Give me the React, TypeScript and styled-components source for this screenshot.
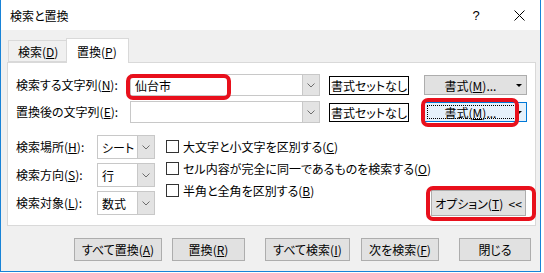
import styled, { createGlobalStyle } from "styled-components";

const GlobalStyle = createGlobalStyle`
  html, body {
    margin: 0;
    padding: 0;
    background: #fff;
  }
  body {
    font-family: "Noto Sans CJK JP", "Noto Sans", sans-serif;
    font-size: 12px;
    font-feature-settings: "palt";
    color: #000;
  }
  u {
    text-underline-offset: 1px;
  }
`;

const Window = styled.div`
  box-sizing: border-box;
  width: 541px;
  height: 272px;
  border: 1px solid #1883d7;
  border-top: none;
  display: flex;
  flex-direction: column;
  background: #f0f0f0;
`;

const TitleBar = styled.div`
  height: 30px;
  background: #fff;
  display: flex;
  align-items: center;
  padding-left: 9px;
`;

const TitleText = styled.div`
  flex: 1;
`;

const CaptionButton = styled.div<{ $w: number }>`
  width: ${(p) => p.$w}px;
  height: 30px;
  display: flex;
  align-items: center;
  justify-content: center;
  font-family: "Liberation Sans", sans-serif;
  font-size: 13px;
`;

const Body = styled.div`
  flex: 1;
  display: flex;
  flex-direction: column;
  padding: 8px 5px 0 6px;
`;

const TabRow = styled.div`
  display: flex;
  align-items: flex-end;
  height: 24px;
  padding-left: 1px;
  position: relative;
  z-index: 1;
`;

const Tab = styled.div<{ $active?: boolean; $w: number }>`
  box-sizing: border-box;
  width: ${(p) => p.$w}px;
  height: ${(p) => (p.$active ? 25 : 22)}px;
  margin-bottom: ${(p) => (p.$active ? -1 : 0)}px;
  margin-left: ${(p) => (p.$active ? -1 : 0)}px;
  background: ${(p) => (p.$active ? "#fff" : "#f0f0f0")};
  border: 1px solid #d9d9d9;
  border-bottom: ${(p) => (p.$active ? "none" : "1px solid #d9d9d9")};
  display: flex;
  align-items: center;
  padding-left: ${(p) => (p.$active ? 10 : 9)}px;
  padding-top: ${(p) => (p.$active ? 0 : 1)}px;
`;

const Panel = styled.div`
  box-sizing: border-box;
  height: 164px;
  width: 529px;
  background: #fff;
  border: 1px solid #d9d9d9;
  padding: 11px 0 0 8px;
  display: flex;
  flex-direction: column;
`;

const FieldGrid = styled.div`
  display: grid;
  grid-template-columns: 114px 190px 89px 118px;
  row-gap: 5px;
  align-items: center;
`;

const Label = styled.div`
  white-space: nowrap;
  line-height: 22px;
`;

const Combo = styled.div<{ $w: number; $h: number }>`
  position: relative;
  box-sizing: border-box;
  width: ${(p) => p.$w}px;
  height: ${(p) => p.$h}px;
  border: 1px solid #c8c8c8;
  display: flex;
  align-items: center;
  background: #fff;
`;

const ComboText = styled.div`
  flex: 1;
  padding-left: 4px;
  white-space: nowrap;
`;

const ComboArrow = styled.div`
  width: 16px;
  align-self: stretch;
  background: #e3e3e3;
  border-left: 1px solid #c8c8c8;
  display: flex;
  align-items: center;
  justify-content: center;
`;

const OutlineButton = styled.div`
  box-sizing: border-box;
  width: 80px;
  height: 19px;
  margin-left: 9px;
  border: 1px solid #000;
  background: #fff;
  display: flex;
  align-items: center;
  justify-content: center;
  white-space: nowrap;
`;

const FormatButton = styled.div<{ $focused?: boolean }>`
  position: relative;
  box-sizing: border-box;
  width: 103px;
  height: 20px;
  margin-left: 15px;
  border: 1px solid ${(p) => (p.$focused ? "#0078d7" : "#adadad")};
  background: ${(p) => (p.$focused ? "#e5f1fb" : "#e1e1e1")};
  display: flex;
  align-items: center;
  justify-content: center;
  padding-right: 10px;
  white-space: nowrap;
`;

const FocusRing = styled.div`
  position: absolute;
  left: 2px;
  top: 2px;
  right: 10px;
  bottom: 2px;
  border: 1px dotted #000;
`;

const Caret = styled.div`
  position: absolute;
  right: 4px;
  top: 8px;
  width: 0;
  height: 0;
  border-left: 3px solid transparent;
  border-right: 3px solid transparent;
  border-top: 3px solid #000;
`;

const Highlight = styled.div<{ $l: number; $t: number; $w: number; $h: number }>`
  position: absolute;
  box-sizing: border-box;
  left: ${(p) => p.$l}px;
  top: ${(p) => p.$t}px;
  width: ${(p) => p.$w}px;
  height: ${(p) => p.$h}px;
  border: 4px solid #e8101c;
  border-radius: 7px;
  pointer-events: none;
`;

const Options = styled.div`
  display: flex;
  margin-top: 12px;
  padding-right: 9px;
`;

const SelectColumn = styled.div`
  display: grid;
  grid-template-columns: 81px 58px;
  row-gap: 4px;
  align-items: center;
`;

const CheckColumn = styled.div`
  display: flex;
  flex-direction: column;
  margin-left: 11px;
`;

const CheckRow = styled.div`
  height: 22px;
  display: flex;
  align-items: center;
  gap: 4px;
  white-space: nowrap;
`;

const CheckBox = styled.div`
  box-sizing: border-box;
  width: 13px;
  height: 13px;
  border: 1px solid #333;
  background: #fff;
`;

const OptionButton = styled.div`
  position: relative;
  box-sizing: border-box;
  margin-left: auto;
  align-self: flex-end;
  margin-bottom: -1px;
  width: 99px;
  height: 26px;
  border: 1px solid #adadad;
  background: #e1e1e1;
  display: flex;
  align-items: center;
  justify-content: center;
  white-space: nowrap;
`;

const Footer = styled.div`
  display: flex;
  justify-content: flex-end;
  margin-top: 12px;
  padding-right: 4px;
`;

const DialogButton = styled.div<{ $w: number; $gap: number }>`
  box-sizing: border-box;
  width: ${(p) => p.$w}px;
  height: 23px;
  margin-left: ${(p) => p.$gap}px;
  border: 1px solid #adadad;
  background: #e1e1e1;
  display: flex;
  align-items: center;
  justify-content: center;
  white-space: nowrap;
`;

function Chevron() {
  return (
    <svg width="8" height="5" viewBox="0 0 8 5">
      <polyline points="0.5,0.5 4,4 7.5,0.5" fill="none" stroke="#6d6d6d" strokeWidth="1" />
    </svg>
  );
}

function CloseIcon() {
  return (
    <svg width="11" height="11" viewBox="0 0 11 11">
      <path d="M0.5 0.5 L10.5 10.5 M10.5 0.5 L0.5 10.5" stroke="#000" strokeWidth="1" />
    </svg>
  );
}

function Select({ value }: { value: string }) {
  return (
    <Combo $w={58} $h={24}>
      <ComboText>{value}</ComboText>
      <ComboArrow>
        <Chevron />
      </ComboArrow>
    </Combo>
  );
}

const selects = [
  { label: "検索場所", key: "H", value: "シート" },
  { label: "検索方向", key: "S", value: "行" },
  { label: "検索対象", key: "L", value: "数式" },
];

const checks = [
  { text: "大文字と小文字を区別する", key: "C" },
  { text: "セル内容が完全に同一であるものを検索する", key: "O" },
  { text: "半角と全角を区別する", key: "B" },
];

const footerButtons = [
  { text: "すべて置換", key: "A", w: 88, gap: 0 },
  { text: "置換", key: "R", w: 73, gap: 10 },
  { text: "すべて検索", key: "I", w: 85, gap: 20 },
  { text: "次を検索", key: "F", w: 78, gap: 11 },
  { text: "閉じる", key: "", w: 72, gap: 20 },
];

export default function App() {
  return (
    <>
      <GlobalStyle />
      <Window>
        <TitleBar>
          <TitleText>検索と置換</TitleText>
          <CaptionButton $w={46}>?</CaptionButton>
          <CaptionButton $w={41}>
            <CloseIcon />
          </CaptionButton>
        </TitleBar>
        <Body>
          <TabRow>
            <Tab $w={59}>
              検索(<u>D</u>)
            </Tab>
            <Tab $active $w={63}>
              置換(<u>P</u>)
            </Tab>
          </TabRow>
          <Panel>
            <FieldGrid>
              <Label>
                検索する文字列(<u>N</u>):
              </Label>
              <Combo $w={190} $h={22}>
                <ComboText>仙台市</ComboText>
                <ComboArrow>
                  <Chevron />
                </ComboArrow>
                <Highlight $l={-5} $t={-1} $w={105} $h={26} />
              </Combo>
              <OutlineButton>書式セットなし</OutlineButton>
              <FormatButton>
                書式(<u>M</u>)...
                <Caret />
              </FormatButton>

              <Label>
                置換後の文字列(<u>E</u>):
              </Label>
              <Combo $w={190} $h={22}>
                <ComboText />
                <ComboArrow>
                  <Chevron />
                </ComboArrow>
              </Combo>
              <OutlineButton>書式セットなし</OutlineButton>
              <FormatButton $focused>
                <FocusRing />
                書式(<u>M</u>)...
                <Caret />
                <Highlight $l={-4} $t={-5} $w={98} $h={29} />
              </FormatButton>
            </FieldGrid>

            <Options>
              <SelectColumn>
                {selects.flatMap((s) => [
                  <Label key={s.key + "l"}>
                    {s.label}(<u>{s.key}</u>):
                  </Label>,
                  <Select key={s.key} value={s.value} />,
                ])}
              </SelectColumn>
              <CheckColumn>
                {checks.map((c) => (
                  <CheckRow key={c.key}>
                    <CheckBox />
                    <span>
                      {c.text}(<u>{c.key}</u>)
                    </span>
                  </CheckRow>
                ))}
              </CheckColumn>
              <OptionButton>
                オプション(<u>T</u>)&nbsp; &lt;&lt;
                <Highlight $l={-6} $t={-5} $w={110} $h={35} />
              </OptionButton>
            </Options>
          </Panel>
          <Footer>
            {footerButtons.map((b) => (
              <DialogButton key={b.text} $w={b.w} $gap={b.gap}>
                {b.key ? (
                  <>
                    {b.text}(<u>{b.key}</u>)
                  </>
                ) : (
                  b.text
                )}
              </DialogButton>
            ))}
          </Footer>
        </Body>
      </Window>
    </>
  );
}
